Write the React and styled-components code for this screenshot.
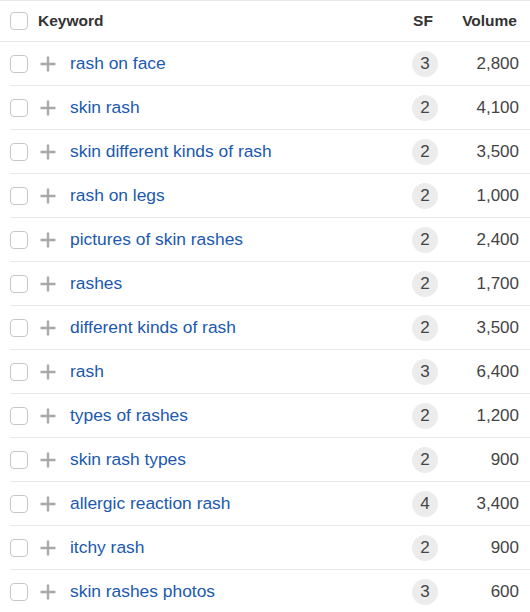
import React from "react";
import styled, { createGlobalStyle } from "styled-components";

const rows = [
  { keyword: "rash on face", sf: 3, volume: "2,800" },
  { keyword: "skin rash", sf: 2, volume: "4,100" },
  { keyword: "skin different kinds of rash", sf: 2, volume: "3,500" },
  { keyword: "rash on legs", sf: 2, volume: "1,000" },
  { keyword: "pictures of skin rashes", sf: 2, volume: "2,400" },
  { keyword: "rashes", sf: 2, volume: "1,700" },
  { keyword: "different kinds of rash", sf: 2, volume: "3,500" },
  { keyword: "rash", sf: 3, volume: "6,400" },
  { keyword: "types of rashes", sf: 2, volume: "1,200" },
  { keyword: "skin rash types", sf: 2, volume: "900" },
  { keyword: "allergic reaction rash", sf: 4, volume: "3,400" },
  { keyword: "itchy rash", sf: 2, volume: "900" },
  { keyword: "skin rashes photos", sf: 3, volume: "600" },
];

const PlusIcon = () => (
  <svg width="16" height="16" viewBox="0 0 16 16">
    <path d="M8 0.5v15M0.5 8h15" stroke="#a9a9a9" strokeWidth="2.4" fill="none" />
  </svg>
);

const App = () => (
  <>
    <GlobalStyle />
    <Table>
      <HeaderRow>
        <Checkbox />
        <HeaderLabel>Keyword</HeaderLabel>
        <SfCell>
          <HeaderText>SF</HeaderText>
        </SfCell>
        <VolumeCell>
          <HeaderText>Volume</HeaderText>
        </VolumeCell>
      </HeaderRow>
      {rows.map((r) => (
        <Row key={r.keyword}>
          <Checkbox />
          <AddButton>
            <PlusIcon />
          </AddButton>
          <KeywordLink>{r.keyword}</KeywordLink>
          <SfCell>
            <Badge>{r.sf}</Badge>
          </SfCell>
          <VolumeCell>{r.volume}</VolumeCell>
        </Row>
      ))}
    </Table>
  </>
);

const GlobalStyle = createGlobalStyle`
  body {
    margin: 0;
    background: #fff;
    font-family: "Liberation Sans", Arial, sans-serif;
  }
`;

const Table = styled.div`
  width: 530px;
  border-top: 1px solid #e8e8e8;
`;

const HeaderRow = styled.div`
  display: flex;
  align-items: center;
  height: 40px;
  padding: 0 13px 0 10px;
  border-bottom: 1px solid #e8e8e8;
`;

const HeaderText = styled.span`
  font-size: 15.5px;
  font-weight: bold;
  color: #333;
`;

const HeaderLabel = styled(HeaderText)`
  flex: 1;
  margin-left: 10px;
`;

const Row = styled.div`
  display: flex;
  align-items: center;
  height: 43px;
  margin-left: 10px;
  padding-right: 11px;
  border-bottom: 1px solid #e8e8e8;
`;

const Checkbox = styled.span`
  box-sizing: border-box;
  width: 18px;
  height: 18px;
  border: 1px solid #c9c9c9;
  border-radius: 4px;
  background: #fff;
  flex-shrink: 0;
`;

const AddButton = styled.span`
  display: flex;
  margin-left: 12px;
  margin-right: 14px;
`;

const KeywordLink = styled.a`
  flex: 1;
  font-size: 17.4px;
  color: #2059ad;
  text-decoration: none;
  white-space: nowrap;
`;

const SfCell = styled.div`
  width: 40px;
  display: flex;
  justify-content: center;
`;

const Badge = styled.span`
  width: 26px;
  height: 26px;
  border-radius: 50%;
  background: #ececec;
  display: flex;
  align-items: center;
  justify-content: center;
  font-size: 17px;
  color: #444;
`;

const VolumeCell = styled.div`
  width: 74px;
  text-align: right;
  font-size: 17px;
  color: #444;
`;

export default App;
